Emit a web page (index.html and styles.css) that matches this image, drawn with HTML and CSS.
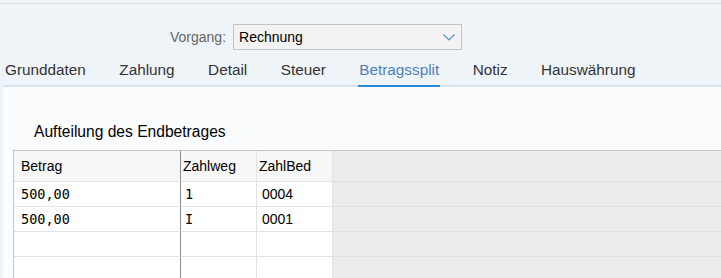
FILE: index.html
```html
<!DOCTYPE html>
<html lang="de">
<head>
  <meta charset="UTF-8">
  <meta name="viewport" content="width=device-width, initial-scale=1.0">
  <title>Beleg - Betragssplit</title>
  <link rel="stylesheet" href="styles.css">
</head>
<body>

<div class="shell-top"></div>

<div class="form-row">
  <label class="field-label">Vorgang:</label>
  <div class="select">
    <span>Rechnung</span>
    <svg class="chevron" width="12" height="7" viewBox="0 0 12 7">
      <path d="M0.5 0.5 L6 6 L11.5 0.5" fill="none" stroke="#5b8fca" stroke-width="1.2"/>
    </svg>
  </div>
</div>

<div class="content">
  <div class="tabs">
    <div class="tab">Grunddaten</div>
    <div class="tab">Zahlung</div>
    <div class="tab">Detail</div>
    <div class="tab">Steuer</div>
    <div class="tab active">Betragssplit</div>
    <div class="tab">Notiz</div>
    <div class="tab">Hauswährung</div>
  </div>

  <div class="panel">
    <h2 class="section-title">Aufteilung des Endbetrages</h2>

    <div class="split-table">
      <div class="row head">
        <div class="cell betrag">Betrag</div>
        <div class="cell zahlweg">Zahlweg</div>
        <div class="cell zahlbed">ZahlBed</div>
        <div class="cell rest"></div>
      </div>
      <div class="row">
        <div class="cell betrag mono">500,00</div>
        <div class="cell zahlweg mono">1</div>
        <div class="cell zahlbed">0004</div>
        <div class="cell rest"></div>
      </div>
      <div class="row">
        <div class="cell betrag mono">500,00</div>
        <div class="cell zahlweg mono">I</div>
        <div class="cell zahlbed">0001</div>
        <div class="cell rest"></div>
      </div>
      <div class="row">
        <div class="cell betrag"></div>
        <div class="cell zahlweg"></div>
        <div class="cell zahlbed"></div>
        <div class="cell rest"></div>
      </div>
      <div class="row">
        <div class="cell betrag"></div>
        <div class="cell zahlweg"></div>
        <div class="cell zahlbed"></div>
        <div class="cell rest"></div>
      </div>
    </div>
  </div>
</div>

</body>
</html>
```

FILE: styles.css
```css
* {
  margin: 0;
  padding: 0;
  box-sizing: border-box;
  font-family: 'Liberation Sans', Arial, sans-serif;
}

html, body {
  height: 100%;
  overflow: hidden;
}

body {
  background-color: #eff4f9;
  color: #000;
  font-size: 14px;
}

.shell-top {
  height: 4px;
  border-bottom: 1px solid #d6dee6;
}

.form-row {
  display: flex;
  align-items: center;
  gap: 7px;
  padding: 20px 0 0 170px;
}

.field-label {
  color: #666;
  font-size: 14px;
}

.select {
  width: 229px;
  height: 26px;
  display: flex;
  align-items: center;
  justify-content: space-between;
  padding: 0 6px 0 5px;
  background-color: #f3f3f3;
  border: 1px solid #c4c4c4;
  line-height: 24px;
}

.chevron {
  display: block;
  margin-top: 1px;
}

.content {
  margin: 11px 0 0 3px;
}

.tabs {
  display: flex;
  gap: 31.5px;
  padding-left: 1px;
  box-shadow: inset 0 -2px 0 #d9e4ee;
}

.tab {
  font-size: 15.3px;
  line-height: 18px;
  color: #333;
  padding: 0 1px 6px;
  border-bottom: 2px solid transparent;
}

.tab.active {
  color: #4d7fb8;
  border-bottom-color: #2b8ad4;
}

.panel {
  background-color: #fbfcfe;
  height: calc(100vh - 87px);
  overflow: hidden;
  padding-top: 36px;
}

.section-title {
  font-size: 15.6px;
  font-weight: normal;
  line-height: 18px;
  padding-left: 31px;
  color: #000;
}

.split-table {
  margin: 9px 0 0 10px;
  border-top: 1px solid #c6c6c6;
  border-left: 1px solid #c6c6c6;
}

.row {
  display: grid;
  grid-template-columns: 167px 76px 76px 1fr;
  height: 25px;
}

.row.head {
  height: 31px;
  background-color: #f7f7f7;
}

.cell {
  border-right: 1px solid #e3e3e3;
  border-bottom: 1px solid #e3e3e3;
  background-color: #fff;
  line-height: 24px;
  white-space: nowrap;
}

.head .cell {
  background-color: #f7f7f7;
  line-height: 30px;
}

.cell.betrag {
  border-right-color: #8c8c8c;
  padding-left: 7px;
}

.cell.zahlweg { padding-left: 4px; }
.cell.zahlbed { padding-left: 5px; }
.head .cell.zahlweg,
.head .cell.zahlbed { padding-left: 2px; }

.cell.rest {
  background-color: #ececec;
  border-right: none;
  border-bottom-color: #e0e0e0;
}

.mono {
  font-family: 'DejaVu Sans Mono', monospace;
  font-size: 13.5px;
}
```
